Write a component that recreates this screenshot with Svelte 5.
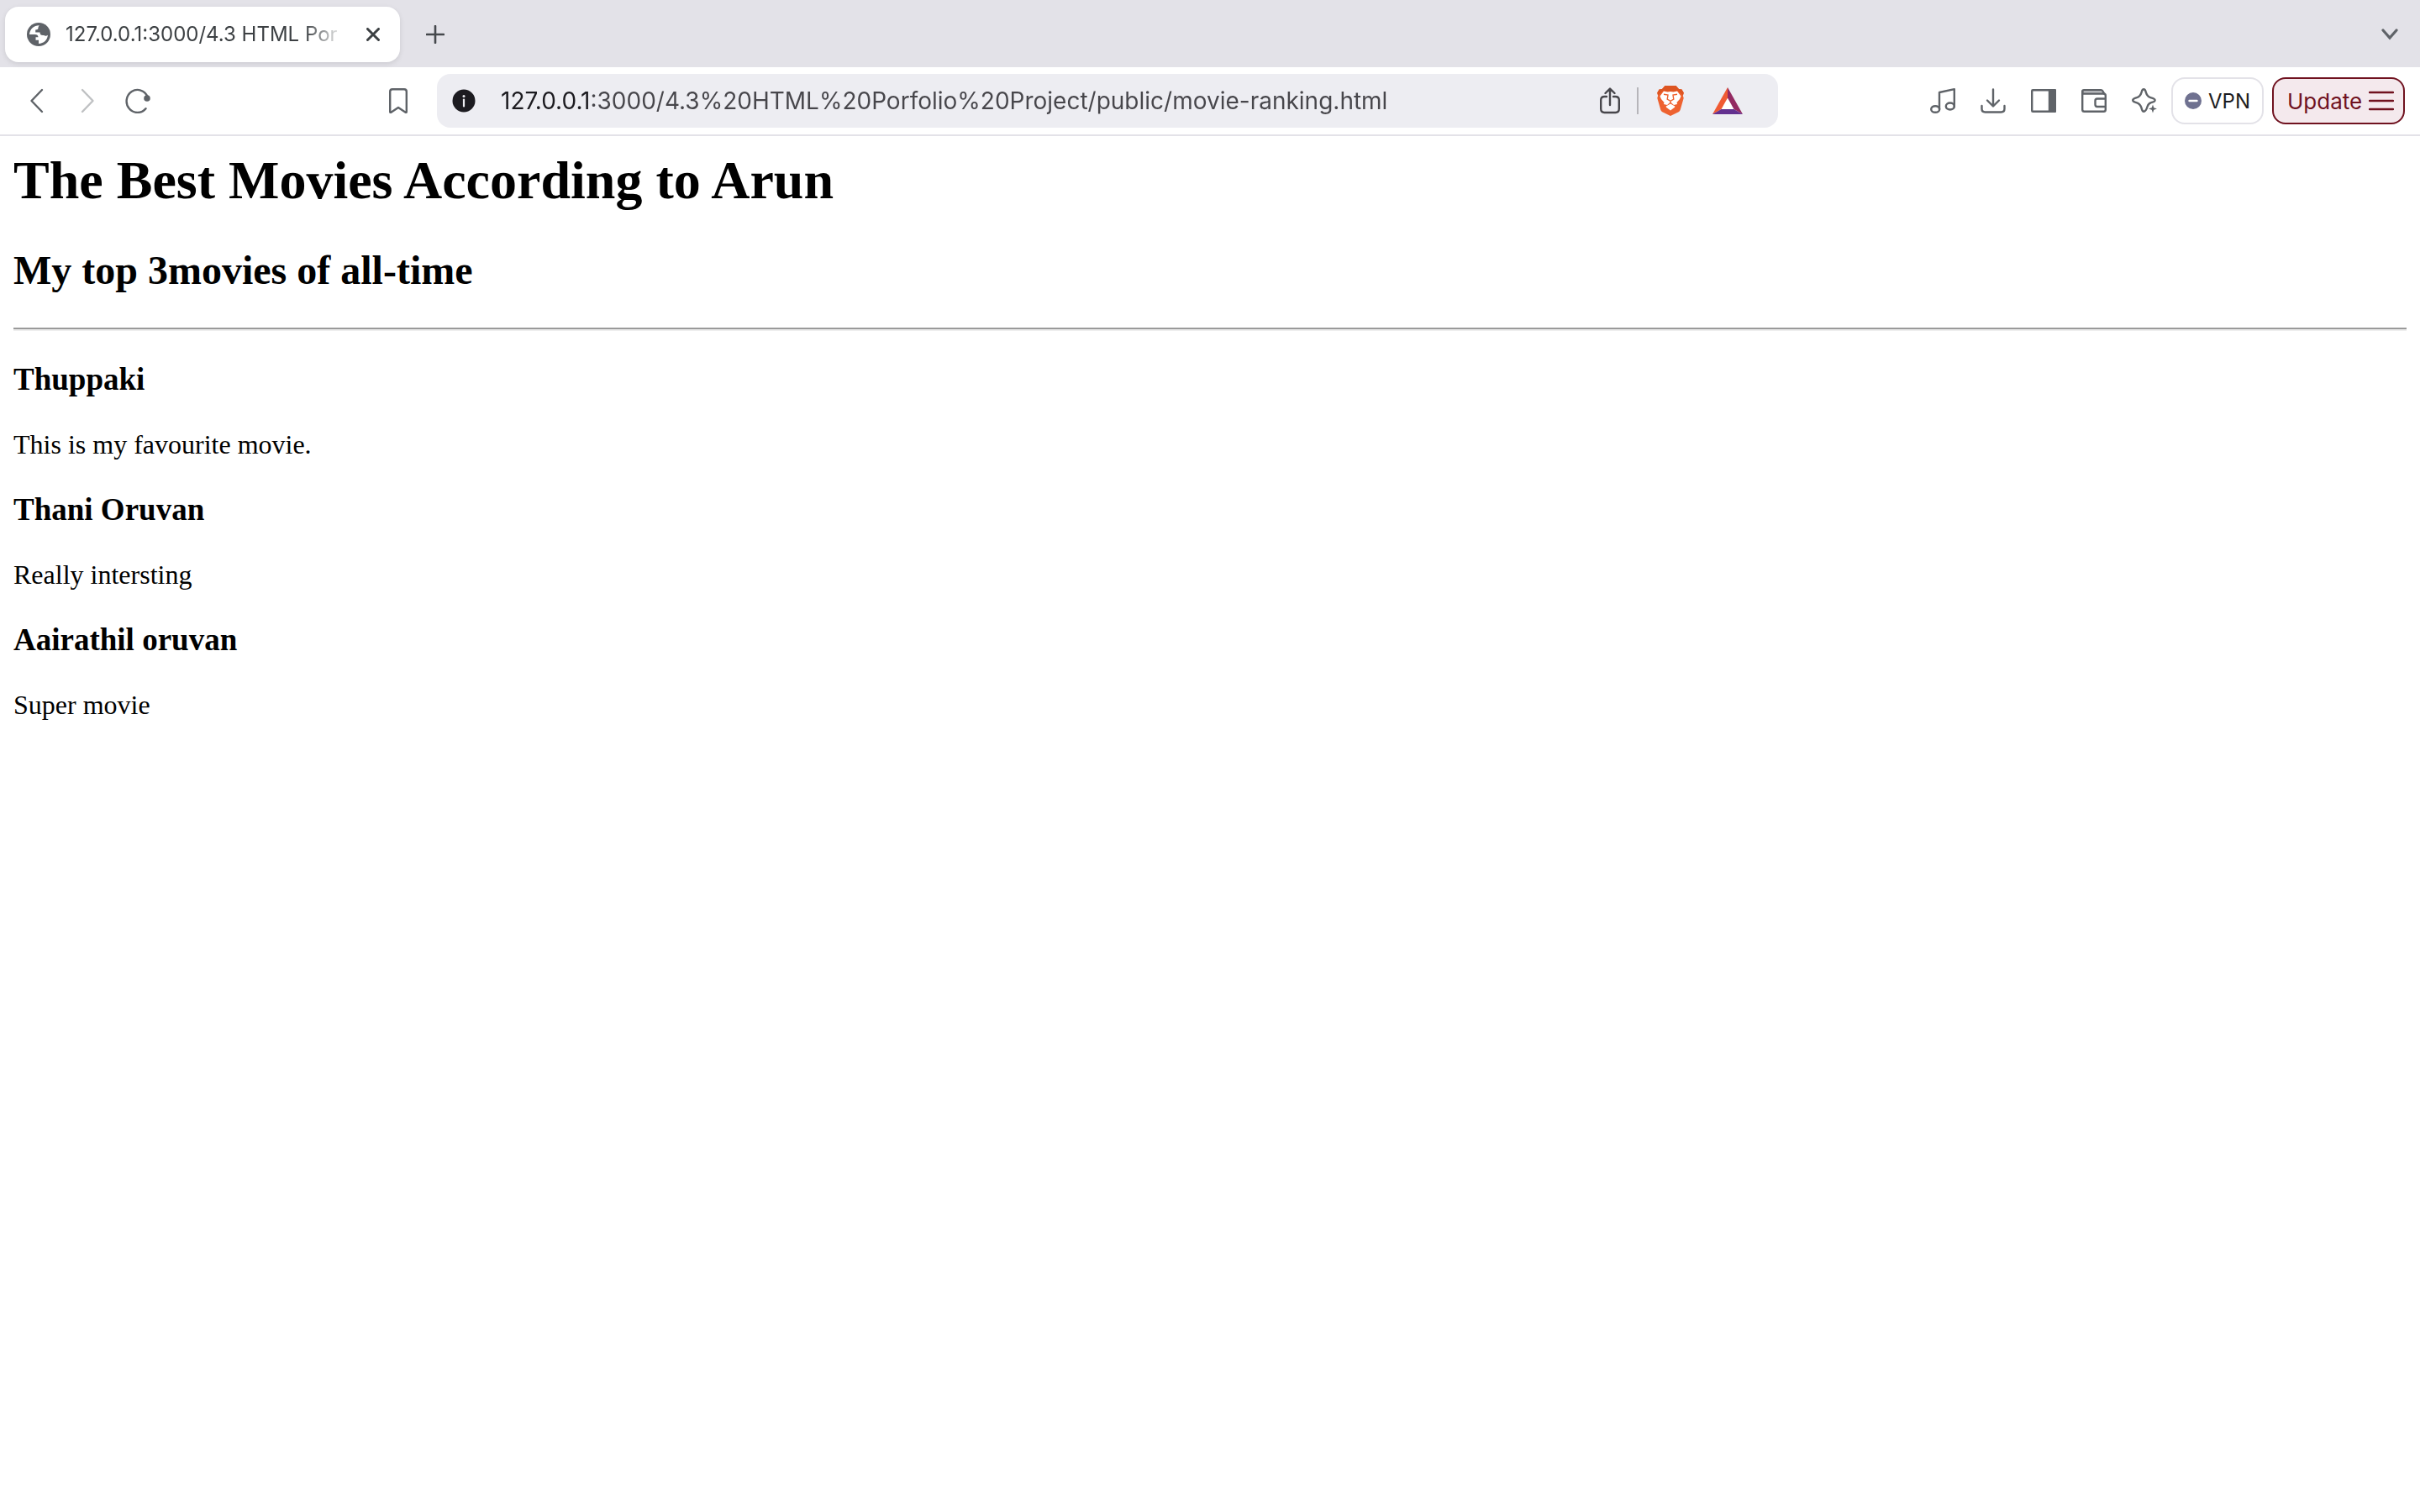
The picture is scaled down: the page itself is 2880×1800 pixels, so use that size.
<script>
  const address = '127.0.0.1:3000/4.3%20HTML%20Porfolio%20Project/public/movie-ranking.html';
  const movies = [
    { title: 'Thuppaki', note: 'This is my favourite movie.' },
    { title: 'Thani Oruvan', note: 'Really intersting' },
    { title: 'Aairathil oruvan', note: 'Super movie' }
  ];
</script>

<div class="browser">
  <header>
    <div class="tabstrip">
      <div class="tab">
        <svg width="28" height="28" viewBox="0 0 28 28" aria-hidden="true">
          <circle cx="14" cy="14" r="14" fill="#5f6368" />
          <path fill="#fff" d="M15 3.2C8.500 3 3.500 7.500 3 14h6.500c2.500 0 4 1.200 4 3.300h-3v3.400h3.500v4.200c6-.2 10.500-4.500 10.900-10.200-1.300 1.200-3.400 1.400-4.700.3-3.200.4-4.700-.7-4.700-3.500h-5.300V8.500c2.300 0 3.300-.7 3.300-2.500 0-1.300.5-2.100 1.500-2.800z" />
        </svg>
        <span class="tab-title">127.0.0.1:3000/4.3 HTML Por</span>
        <button class="icon" aria-label="Close tab">
          <svg width="16" height="16" viewBox="0 0 16 16"><path d="M1.500 1.500l13 13M14.500 1.500l-13 13" fill="none" stroke="#3c4043" stroke-width="3" stroke-linecap="round" /></svg>
        </button>
      </div>
      <button class="icon new-tab" aria-label="New tab">
        <svg width="22" height="22" viewBox="0 0 22 22"><path d="M11 1v20M1 11h20" fill="none" stroke="#45484c" stroke-width="2.600" stroke-linecap="round" /></svg>
      </button>
      <button class="icon tab-search" aria-label="Search tabs">
        <svg width="20" height="14" viewBox="0 0 20 14"><path d="M2 2l8 9 8-9" fill="none" stroke="#5f6368" stroke-width="3.200" stroke-linecap="round" /></svg>
      </button>
    </div>

    <div class="toolbar">
      <div class="nav">
        <button class="icon" aria-label="Back"><svg class="line" width="30" height="30" viewBox="0 0 30 30"><path d="M21 2L8.500 15 21 28" /></svg></button>
        <button class="icon" aria-label="Forward" disabled><svg class="line pale" width="30" height="30" viewBox="0 0 30 30"><path d="M9 2l12.500 13L9 28" /></svg></button>
        <button class="icon" aria-label="Reload"><svg class="line" width="30" height="30" viewBox="0 0 30 30"><path d="M24.500 24.200A13 13.500 0 1 1 26.500 10" /><circle cx="26" cy="12" r="3.800" fill="#5f6368" stroke="none" /></svg></button>
      </div>
      <button class="icon bookmark" aria-label="Bookmark"><svg class="line" width="22" height="30" viewBox="0 0 22 30"><path d="M4 1.200h14q2.800 0 2.800 2.800v24.200q0 1.200-1.200.5L11 23l-8.600 5.700q-1.200.7-1.200-.5V4q0-2.800 2.800-2.800z" /></svg></button>

      <div class="address">
        <button class="icon" aria-label="Site information">
          <svg width="28" height="28" viewBox="0 0 28 28"><circle cx="14" cy="14" r="13.500" fill="#1c1b20" /><circle cx="14" cy="8.500" r="1.500" fill="#ededf2" /><path d="M14 12.500v8" stroke="#ededf2" stroke-width="2.200" stroke-linecap="round" /></svg>
        </button>
        <input type="text" aria-label="Address" value={address} />
        <button class="icon share" aria-label="Share">
          <svg class="line dark" width="24" height="32" viewBox="0 0 24 32"><path d="M8 11H5.500Q1.200 11 1.200 15v10.500Q1.200 30 5.500 30h13q4.300 0 4.300-4.500V15q0-4-4.300-4H16M12 21V2M6.500 7L12 1.500 17.500 7" /></svg>
        </button>
        <span class="divider"></span>
        <button class="icon shields" aria-label="Brave Shields">
          <svg width="32" height="36" viewBox="0 0 32 36">
            <path fill="#ee6230" d="M9.500 0h13l3.500 4 3.500.6 2.300 4-1 3.200.9 3-4 14q-.6 1.500-2 2.500L16 36l-9.700-4.700q-1.400-1-2-2.500l-4-14 .9-3-1-3.200 2.300-4L6 4z" />
            <path fill="#dd5522" d="M9.500 0h13l3.500 4 3.500.6 2.300 4-1 3.200L25 6l-5 .8h-8L7 6 1.200 11.800l-1-3.200 2.300-4L6 4z" />
            <path fill="#fff" d="M8 6.500l4.500 1L16 7l3.500.5 4.500-1 4.500 6-1.500 3.500-3.500 4 .5 2-4 1L16 19.500 12 23l-4-1 .5-2L5 16l-1.500-3.500z" />
            <path fill="#fff" d="M16 21.500l5.300 3-.3 1.200L16 29.500l-5-3.800-.3-1.200z" />
            <path fill="none" stroke="#ee6230" stroke-width="1.400" d="M8 10.200l5 .8-.8 5.200L16 18.300l3.800-2.100L19 11l5-.8M16 18.500V21" />
          </svg>
        </button>
        <button class="icon rewards" aria-label="Brave Rewards">
          <svg width="36" height="32" viewBox="0 0 36 32"><path fill="#fff" d="M18 12l8 14H10z" /><path fill="#f05a33" d="M18 0v12.500L10.500 26 0 32z" /><path fill="#932a62" d="M18 0l18 32-10.500-6L18 12.500z" /><path fill="#63308f" d="M0 32l10.500-6h15L36 32z" /></svg>
        </button>
      </div>

      <div class="tools">
        <button class="icon" aria-label="Playlist"><svg class="line" width="30" height="30" viewBox="0 0 30 30"><path d="M11 25V5l17.800-3.800V22" /><ellipse cx="6.200" cy="25" rx="5" ry="3.800" /><ellipse cx="23.800" cy="21.500" rx="5" ry="4" /></svg></button>
        <button class="icon" aria-label="Downloads"><svg class="line" width="30" height="30" viewBox="0 0 30 30"><path d="M15 1.500V21M8 14.500l7 7 7-7M1.500 21v3.500q0 4 4 4h19q4 0 4-4V21" /></svg></button>
        <button class="icon" aria-label="Sidebar"><svg class="line" width="30" height="28" viewBox="0 0 30 28"><rect x="1.200" y="1.200" width="27.600" height="25.600" rx="1" /><path d="M22 1.200h6.800v25.600H22z" fill="#5f6368" /></svg></button>
        <button class="icon" aria-label="Wallet"><svg class="line" width="30" height="28" viewBox="0 0 30 28"><path d="M1.200 5.500V3q0-1.800 1.800-1.800h20.500q1.500 0 2.300 1.800l1.200 2.500" fill="#d4d5d8" /><path d="M1.200 3v21.500q0 2.300 2.300 2.300h23q2.300 0 2.300-2.300V8q0-2.500-2.300-2.500H1.200M28.800 11.500H19q-2.500 0-2.500 2.500v4.500q0 2.500 2.500 2.500h9.800" /></svg></button>
        <button class="icon" aria-label="Leo AI"><svg class="line" width="30" height="30" viewBox="0 0 30 30"><path d="M18.500 22c-.8 2.800-2.400 5.700-4.300 5.700s-2-1.700-2.800-4.500c-1.100-3.700-2.800-5-6-6-2.800-.8-4.200-1.500-4.200-3s1.400-2 4.200-2.800c4-1.200 5.300-2.900 6.300-6.900.5-2.100 1.200-3.300 2.500-3.300s2 1.200 2.500 3.300c1 4 2.300 5.700 6.300 6.900 2.800.8 4.600 1.300 4.600 2.800 0 1.300-1.600 2.200-4.600 3-2 .6-3.500 1.700-4.500 4.800z" /><path d="M25 19.500l1.300 3.700 3.700 1.300-3.700 1.300-1.300 3.700-1.300-3.700-3.700-1.300 3.700-1.300z" fill="#5f6368" stroke="none" /></svg></button>
      </div>
      <button class="pill vpn"><svg width="20" height="20" viewBox="0 0 20 20" aria-hidden="true"><circle cx="10" cy="10" r="10" fill="#6f7190" /><path d="M5.500 10h9" stroke="#fff" stroke-width="2.400" stroke-linecap="round" /></svg>VPN</button>
      <button class="pill update">Update<svg width="30" height="24" viewBox="0 0 30 24" aria-hidden="true"><path d="M1 2h28M1 12h28M1 22h28" stroke="#70121f" stroke-width="2.500" stroke-linecap="round" /></svg></button>
    </div>
  </header>

  <main>
    <h1>The Best Movies According to Arun</h1>
    <h2>My top 3movies of all-time</h2>
    <hr />
    {#each movies as movie}
      <h3>{movie.title}</h3>
      <p>{movie.note}</p>
    {/each}
  </main>
</div>

<style>
  :global(body) { margin: 0; background: #fff; }
  header { font-family: Inter, "Liberation Sans", sans-serif; }
  button, input { font: inherit; color: inherit; margin: 0; padding: 0; border: 0; background: none; }
  svg { display: block; flex: none; }
  .icon { display: flex; align-items: center; justify-content: center; flex: none; }
  .line { fill: none; stroke: #5f6368; stroke-width: 2.4; stroke-linecap: round; stroke-linejoin: round; }
  .pale { stroke: #bfc1c3; }
  .dark { stroke: #47464b; }

  .tabstrip { display: flex; align-items: center; height: 80px; padding: 2px 26px 0 6px; background: #e3e2e8; box-sizing: border-box; }
  .tab { display: flex; align-items: center; width: 470px; height: 66px; padding: 0 24px 0 26px; box-sizing: border-box; border-radius: 16px; background: #fff; box-shadow: 0 2px 6px rgb(0 0 0 / 10%); }
  .tab-title { flex: 1; margin: 0 20px 0 18px; white-space: nowrap; font-size: 24px; line-height: 32px; color: #3c4043; mask-image: linear-gradient(to right, #000 84%, transparent 98%); }
  .new-tab { margin-left: 31px; }
  .tab-search { margin-left: auto; }

  .toolbar { display: flex; align-items: center; height: 80px; padding: 0 18px 0 29px; border-bottom: 2px solid #e3e2e8; }
  .nav { display: flex; gap: 30px; }
  .bookmark { margin: 0 35px 0 284px; }
  .address { display: flex; align-items: center; flex: 1; min-width: 0; height: 64px; padding: 0 42px 0 18px; box-sizing: border-box; border-radius: 16px; background: #ededf2; }
  .address input { flex: 1; min-width: 0; height: 40px; margin: 0 24px 0 30px; font-size: 28px; color: transparent; background: linear-gradient(to right, #1c1b20 108px, #47464b 108px); background-clip: text; outline: 0; }
  .divider { width: 2px; height: 32px; margin: 0 22px 0 20px; background: #b6b5ba; }
  .rewards { margin-left: 34px; }
  .tools { display: flex; align-items: center; gap: 30px; margin: 0 17px 0 181px; }
  .pill { display: flex; align-items: center; justify-content: space-between; height: 56px; box-sizing: border-box; border-radius: 16px; white-space: nowrap; }
  .vpn { width: 110px; padding: 0 14px; border: 2px solid #e3e2e8; font-size: 24px; color: #1c1b20; }
  .update { width: 158px; margin-left: 10px; padding: 0 11px 0 16px; border: 2px solid #70121f; background: #f4e9ed; font-size: 26px; color: #70121f; }

  main { padding: 16px; font-family: "Liberation Serif", serif; color: #000; }
  h1, h2, h3, p { margin: 0; }
  h1 { font-size: 64px; line-height: 74px; }
  h2 { margin: 42px 0 40px; font-size: 48px; line-height: 56px; }
  hr { margin: 0; border: 0; border-top: 2px solid #9a9a9a; border-bottom: 2px solid #eee; }
  h3 { margin: 38px 0; font-size: 37px; line-height: 42px; }
  hr + h3 { margin-top: 37px; }
  p { font-size: 32px; line-height: 37px; }
</style>
